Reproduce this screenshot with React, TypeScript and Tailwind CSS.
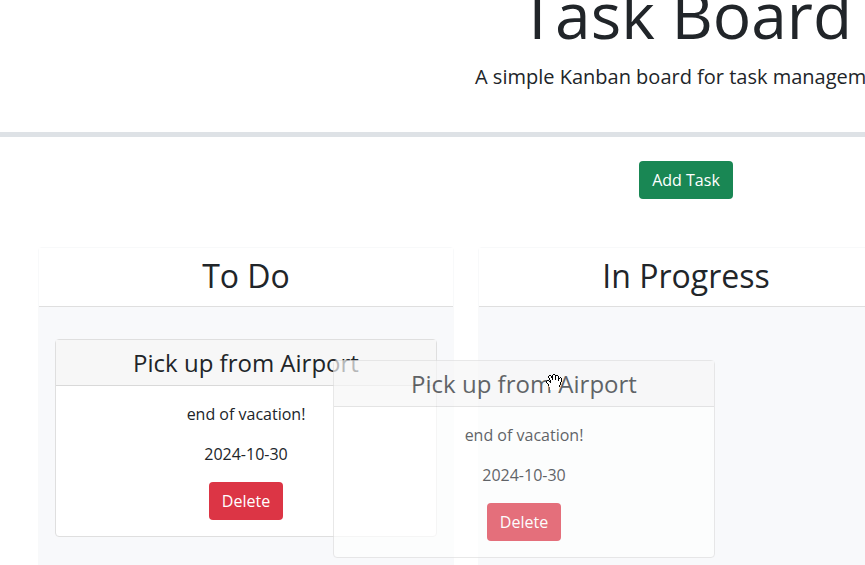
import type { ReactNode } from "react";

type Task = { title: string; description: string; due: string };

const airport: Task = {
  title: "Pick up from Airport",
  description: "end of vacation!",
  due: "2024-10-30",
};

function TaskCard({ task }: { task: Task }) {
  return (
    <article className="rounded border border-[#dfdfdf] bg-white text-center">
      <h3 className="border-b border-[#d9d9d9] bg-[#f7f7f7] py-2 text-2xl leading-[29px]">{task.title}</h3>
      <div className="flex flex-col items-center gap-4 p-4">
        <p>{task.description}</p>
        <p>{task.due}</p>
        <button type="button" className="rounded bg-[#dc3545] px-[13px] py-[7px] text-white">
          Delete
        </button>
      </div>
    </article>
  );
}

function Lane({ title, children }: { title: string; children?: ReactNode }) {
  return (
    <section className="min-h-96 rounded border border-[#f8f9fa] bg-[#f8f9fb]">
      <h2 className="border-b border-[#dfdfdf] bg-white pt-2 pb-2.5 text-center text-[32px] leading-10">{title}</h2>
      <div className="px-4 py-8">{children}</div>
    </section>
  );
}

const hand = [
  ".......##.......",
  "...##.#oo###....",
  "..#oo##oo#oo#...",
  "..#oo##oo#oo#.#.",
  "...#oo#oo#oo##o#",
  "...#oo#oo#oo#oo#",
  ".##.#ooooooo#oo#",
  "#oo##oooooooooo#",
  "#ooo#ooooooooo#.",
  ".#oooooooooooo#.",
  "..#ooooooooooo#.",
  "..#oooooooooo#..",
  "...oooooooooo#..",
  "....ooooooooo...",
  "....ooooooooo...",
  "....ooooooooo...",
];

function HandCursor() {
  return (
    <svg className="absolute top-[374px] left-[546px] h-4 w-4" viewBox="0 0 16 16" shapeRendering="crispEdges" aria-hidden="true">
      {hand.flatMap((row, y) =>
        [...row].map((c, x) =>
          c === "." ? null : <rect key={`${x}-${y}`} x={x} y={y} width="1" height="1" fill={c === "#" ? "#000" : "#fff"} />,
        ),
      )}
    </svg>
  );
}

export default function App() {
  return (
    <div className="h-screen overflow-hidden bg-white font-['Open_Sans',sans-serif] text-base text-[#212529]">
      <div className="relative flow-root min-w-[1372px]">
        <header className="-mt-6 border-b-[5px] border-[#dee2e6] pb-10 text-center">
          <h1 className="mb-2 text-[64px] leading-[78px]">Task Board</h1>
          <p className="text-xl leading-[30px]">A simple Kanban board for task management</p>
        </header>
        <main className="mx-auto max-w-[1320px] px-3 pt-6">
          <div className="mb-12 flex justify-center">
            <button type="button" className="rounded bg-[#198754] px-[13px] py-[7px] text-white">
              Add Task
            </button>
          </div>
          <div className="grid grid-cols-3 gap-6">
            <Lane title="To Do">
              <TaskCard task={airport} />
            </Lane>
            <Lane title="In Progress" />
          </div>
        </main>
        <div className="absolute top-[360px] left-[333px] w-[382px] opacity-70">
          <TaskCard task={airport} />
        </div>
        <HandCursor />
      </div>
    </div>
  );
}
